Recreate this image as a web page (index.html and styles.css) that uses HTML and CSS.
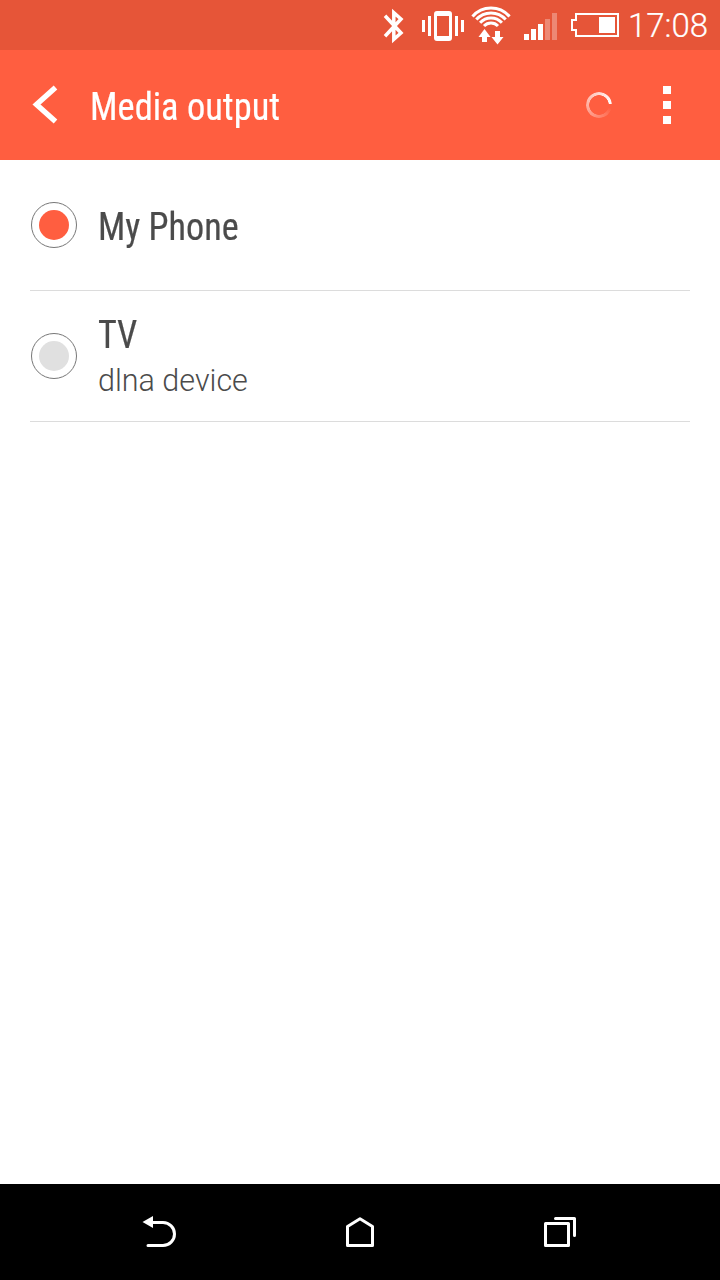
FILE: index.html
```html
<!DOCTYPE html>
<html lang="en">
<head>
<meta charset="utf-8">
<title>Media output</title>
<link rel="stylesheet" href="styles.css">
</head>
<body>
<div class="screen">
  <div class="status-bar">
    <svg class="icon" width="38" height="50" viewBox="380 0 38 50"><path d="M385 15.8L401 33L393.8 39.4V12.6L401 19L385 36.2" fill="none" stroke="#fff" stroke-width="3.5"/></svg>
    <svg class="icon" width="52" height="50" viewBox="418 0 52 50" fill="#fff"><path fill-rule="evenodd" d="M437 11h12q3 0 3 3v24q0 3-3 3h-12q-3 0-3-3V14q0-3 3-3zM437 16v20h12V16z"/><path d="M422 20h3v12h-3zM428 16h3v20h-3zM455 16h3v20h-3zM461 20h3v12h-3z"/></svg>
    <svg class="icon" width="50" height="50" viewBox="470 0 50 50"><g fill="none" stroke="#fff" stroke-width="3"><path d="M472.5 16.4A24.4 24.4 0 0 1 509.5 16.4M476.3 19.6A19.6 19.6 0 0 1 505.7 19.6M480.1 22.8A14.7 14.7 0 0 1 501.9 22.8M484 26A9.7 9.7 0 0 1 498 26"/></g><path fill="#fff" d="M484.5 29l6 8H487v5h-5v-5h-3.5zM495 31h5v6h3.5l-6 7.5-6-7.5h3.5z"/></svg>
    <svg class="icon" width="46" height="50" viewBox="520 0 46 50" fill="#fff"><path d="M524 34h5v6h-5zM531 29h5v11h-5zM538 24h5v16h-5z"/><path opacity=".3" d="M545 19h5v21h-5zM552 13h5v27h-5z"/></svg>
    <svg class="icon" width="62" height="50" viewBox="566 0 62 50"><path d="M576 14h42v22h-42v-6h-4V20h4z" fill="none" stroke="#fff" stroke-width="2"/><path d="M599 17h16v16h-16z" fill="#fff"/></svg>
    <span class="clock">17:08</span>
  </div>
  <header class="action-bar">
    <svg class="back" width="90" height="110" viewBox="0 50 90 110"><path d="M55.5 87.5L36.5 104.5L55.5 121.5" fill="none" stroke="#fff" stroke-width="5.4"/></svg>
    <h1 class="title"><span class="condensed">Media output</span></h1>
    <div class="spinner"></div>
    <div class="overflow"><i></i><i></i><i></i></div>
  </header>
  <main class="outputs">
    <div class="row">
      <div class="radio selected"></div>
      <div class="label"><div class="name"><span class="condensed">My Phone</span></div></div>
    </div>
    <div class="row">
      <div class="radio"></div>
      <div class="label"><div class="name"><span class="condensed">TV</span></div><div class="detail">dlna device</div></div>
    </div>
  </main>
  <nav class="nav-bar">
    <svg width="200" height="96" viewBox="60 1184 200 96"><path d="M151 1222.5h12a11.5 11.5 0 0 1 0 23H148" fill="none" stroke="#fff" stroke-width="3" stroke-linecap="round"/><path d="M142.5 1222l10.5-6v12z" fill="#fff"/></svg>
    <svg width="200" height="96" viewBox="260 1184 200 96"><path d="M347.5 1226.5L360 1218.8L372.5 1226.5V1245.5H347.5z" fill="none" stroke="#fff" stroke-width="3" stroke-linejoin="round"/></svg>
    <svg width="200" height="96" viewBox="460 1184 200 96"><g fill="none" stroke="#fff" stroke-width="3" stroke-linejoin="round" stroke-linecap="round"><path d="M545.5 1223.5h23v22h-23zM555.5 1218.5h19v17"/></g></svg>
  </nav>
</div>
</body>
</html>
```
FILE: styles.css
```css
body { margin: 0; }
.screen {
  width: 720px;
  height: 1280px;
  display: flex;
  flex-direction: column;
  background: #fff;
  color: #4b4b4b;
  font-family: Roboto, sans-serif;
  overflow: hidden;
}
.status-bar {
  height: 50px;
  flex: none;
  display: flex;
  align-items: center;
  padding-left: 380px;
  background: #e65538;
}
.icon { flex: none; display: block; }
.clock {
  padding-top: 2px;
  color: #fff;
  font-size: 33px;
  font-weight: 300;
  line-height: 48px;
  white-space: nowrap;
  -webkit-text-stroke: .2px;
}
.action-bar {
  height: 110px;
  flex: none;
  display: flex;
  align-items: center;
  background: #ff5e40;
  color: #fff;
}
.back { flex: none; }
.title {
  margin: 3px 0 0;
  flex: 1;
  font-size: 39px;
  font-weight: 400;
  line-height: 50px;
}
.condensed {
  display: inline-block;
  font-family: "Roboto Condensed", Roboto, sans-serif;
  font-stretch: 75%;
  white-space: nowrap;
  transform: scaleX(.935);
  transform-origin: 0 0;
  -webkit-text-stroke: .2px;
}
.name .condensed { transform: scaleX(.938); }
.spinner {
  width: 26px;
  height: 26px;
  margin-right: 51px;
  border-radius: 50%;
  background: conic-gradient(from 85deg, transparent 0 5%, rgba(255,255,255,.15) 15%, #fff);
  -webkit-mask: radial-gradient(circle, transparent 9.5px, #000 10.1px);
  mask: radial-gradient(circle, transparent 9.5px, #000 10.1px);
}
.overflow {
  display: flex;
  flex-direction: column;
  gap: 7px;
  margin-right: 49px;
}
.overflow i { width: 8px; height: 8px; background: #fff; }
.outputs { flex: 1; padding: 0 30px; }
.row {
  height: 130px;
  display: flex;
  align-items: center;
  border-bottom: 1px solid #dcdcdc;
}
.radio {
  box-sizing: border-box;
  width: 46px;
  height: 46px;
  margin: 0 21px 0 1px;
  border: 1px solid #777;
  border-radius: 50%;
  padding: 7px;
}
.radio::before {
  content: "";
  display: block;
  height: 30px;
  border-radius: 50%;
  background: #e0e0e0;
}
.radio.selected::before { background: #ff5e40; }
.name { font-size: 38.5px; line-height: 46px; padding-top: 4px; }
.detail { font-size: 30.5px; font-weight: 300; line-height: 46px; }
.nav-bar {
  height: 96px;
  flex: none;
  display: flex;
  justify-content: center;
  background: #000;
}
```
